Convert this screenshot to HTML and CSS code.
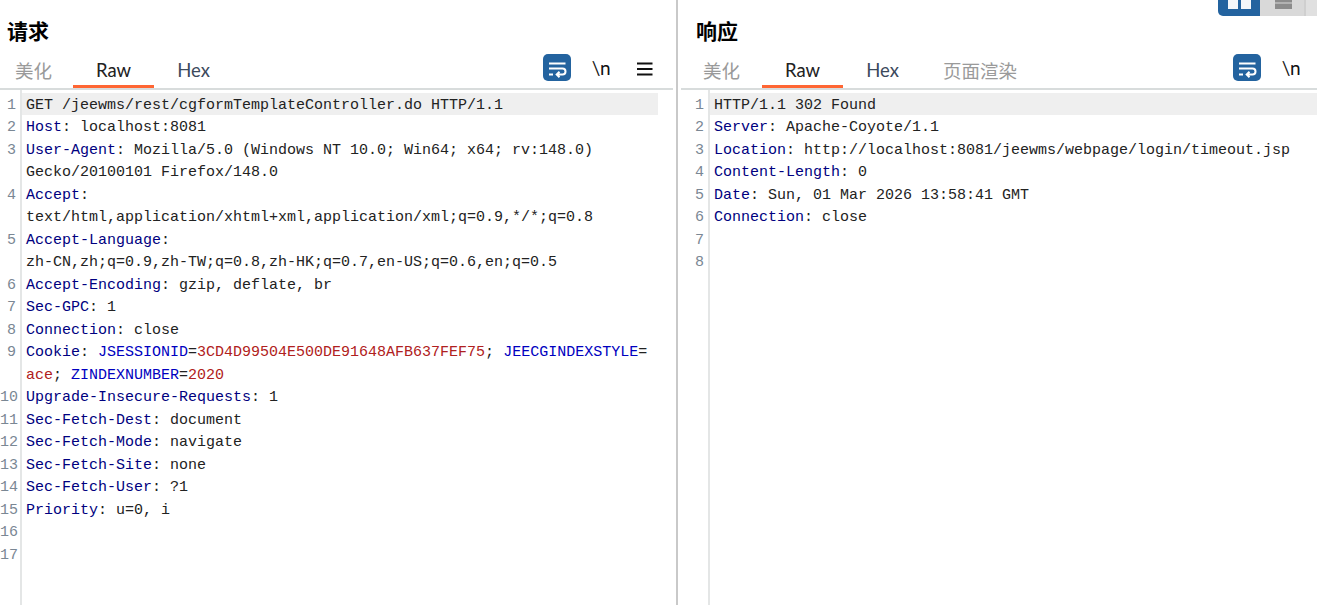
FILE: index.html
```html
<!DOCTYPE html>
<html lang="zh">
<head>
<meta charset="utf-8">
<title>Request / Response</title>
<link rel="stylesheet" href="styles.css">
</head>
<body>
<div class="app">
  <section class="pane pane-left">
    <h2 class="title">请求</h2>
    <div class="bar">
      <nav class="tabs">
        <span class="tab tab-muted tab-first">美化</span>
        <span class="tab tab-active">Raw</span>
        <span class="tab tab-hex">Hex</span>
      </nav>
      <div class="tools">
        <button class="wrap-btn"><svg width="28" height="27" viewBox="0 0 28 27"><path d="M6 9.500h16.500M6 14.500h13.500a3 3 0 0 1 0 6H14M6 20.500h4M16.500 17.800l-2.800 2.700 2.800 2.700" fill="none" stroke="#fff" stroke-width="2"/></svg></button>
        <span class="nl">\n</span>
        <svg class="menu" width="16" height="14" viewBox="0 0 16 14"><path d="M0 1.500h15.500M0 7h15.500M0 12.500h15.500" stroke="#111" stroke-width="2"/></svg>
      </div>
    </div>
    <div class="code">
      <div class="row hl"><span class="n">1</span><span class="c">GET /jeewms/rest/cgformTemplateController.do HTTP/1.1</span></div>
      <div class="row"><span class="n">2</span><span class="c"><b>Host</b>: localhost:8081</span></div>
      <div class="row"><span class="n">3</span><span class="c"><b>User-Agent</b>: Mozilla/5.0 (Windows NT 10.0; Win64; x64; rv:148.0)<br>Gecko/20100101 Firefox/148.0</span></div>
      <div class="row"><span class="n">4</span><span class="c"><b>Accept</b>:<br>text/html,application/xhtml+xml,application/xml;q=0.9,*/*;q=0.8</span></div>
      <div class="row"><span class="n">5</span><span class="c"><b>Accept-Language</b>:<br>zh-CN,zh;q=0.9,zh-TW;q=0.8,zh-HK;q=0.7,en-US;q=0.6,en;q=0.5</span></div>
      <div class="row"><span class="n">6</span><span class="c"><b>Accept-Encoding</b>: gzip, deflate, br</span></div>
      <div class="row"><span class="n">7</span><span class="c"><b>Sec-GPC</b>: 1</span></div>
      <div class="row"><span class="n">8</span><span class="c"><b>Connection</b>: close</span></div>
      <div class="row"><span class="n">9</span><span class="c"><b>Cookie</b>: <i>JSESSIONID</i>=<u>3CD4D99504E500DE91648AFB637FEF75</u>; <i>JEECGINDEXSTYLE</i>=<br><u>ace</u>; <i>ZINDEXNUMBER</i>=<u>2020</u></span></div>
      <div class="row"><span class="n">10</span><span class="c"><b>Upgrade-Insecure-Requests</b>: 1</span></div>
      <div class="row"><span class="n">11</span><span class="c"><b>Sec-Fetch-Dest</b>: document</span></div>
      <div class="row"><span class="n">12</span><span class="c"><b>Sec-Fetch-Mode</b>: navigate</span></div>
      <div class="row"><span class="n">13</span><span class="c"><b>Sec-Fetch-Site</b>: none</span></div>
      <div class="row"><span class="n">14</span><span class="c"><b>Sec-Fetch-User</b>: ?1</span></div>
      <div class="row"><span class="n">15</span><span class="c"><b>Priority</b>: u=0, i</span></div>
      <div class="row"><span class="n">16</span><span class="c"></span></div>
      <div class="row"><span class="n">17</span><span class="c"></span></div>
    </div>
  </section>
  <section class="pane pane-right">
    <div class="layout-switch">
      <span class="ls ls-on"><svg width="26" height="15" viewBox="0 0 26 15"><path d="M1 0h10v9H1zM14 0h10v9H14z" fill="#f4f7fa"/></svg></span>
      <span class="ls ls-off"><svg width="17" height="15" viewBox="0 0 17 15"><path d="M0 0h17v2.500H0zM0 3.500h17V9H0z" fill="#8c8c8c"/></svg></span>
      <span class="ls ls-end"></span>
    </div>
    <h2 class="title">响应</h2>
    <div class="bar">
      <nav class="tabs">
        <span class="tab tab-muted">美化</span>
        <span class="tab tab-active">Raw</span>
        <span class="tab tab-hex">Hex</span>
        <span class="tab tab-muted tab-long">页面渲染</span>
      </nav>
      <div class="tools">
        <button class="wrap-btn"><svg width="28" height="27" viewBox="0 0 28 27"><path d="M6 9.500h16.500M6 14.500h13.500a3 3 0 0 1 0 6H14M6 20.500h4M16.500 17.800l-2.800 2.700 2.800 2.700" fill="none" stroke="#fff" stroke-width="2"/></svg></button>
        <span class="nl">\n</span>
      </div>
    </div>
    <div class="code">
      <div class="row hl"><span class="n">1</span><span class="c">HTTP/1.1 302 Found</span></div>
      <div class="row"><span class="n">2</span><span class="c"><b>Server</b>: Apache-Coyote/1.1</span></div>
      <div class="row"><span class="n">3</span><span class="c"><b>Location</b>: http://localhost:8081/jeewms/webpage/login/timeout.jsp</span></div>
      <div class="row"><span class="n">4</span><span class="c"><b>Content-Length</b>: 0</span></div>
      <div class="row"><span class="n">5</span><span class="c"><b>Date</b>: Sun, 01 Mar 2026 13:58:41 GMT</span></div>
      <div class="row"><span class="n">6</span><span class="c"><b>Connection</b>: close</span></div>
      <div class="row"><span class="n">7</span><span class="c"></span></div>
      <div class="row"><span class="n">8</span><span class="c"></span></div>
    </div>
  </section>
</div>
</body>
</html>
```
FILE: styles.css
```css
* { box-sizing: border-box; }
html, body { margin: 0; height: 100%; overflow: hidden; background: #fff; }
body { font-family: "Noto Sans", "Noto Sans CJK SC", sans-serif; }
.app { display: flex; height: 605px; }
.pane { position: relative; display: flex; flex-direction: column; }
.pane-left { width: 678px; border-right: 2px solid #c9c9c9; padding-right: 3px; }
.pane-right { flex: 1; padding-left: 3px; }
.title { margin: 0; height: 54px; padding: 18px 0 0 7px; font: 700 21px/24px "Noto Sans CJK SC", sans-serif; color: #000; }
.pane-right .title { padding-left: 15px; }
.bar { display: flex; justify-content: space-between; height: 36px; border-bottom: 2px solid #d8dcdc; }
.tabs { display: flex; }
.tab { width: 81px; height: 34px; padding-top: 4px; text-align: center; font: 18.5px/24px Lato, "Noto Sans CJK SC", sans-serif; color: #3c4a5c; }
.tab-first { width: 73px; padding-right: 6px; }
.tab-hex { padding-right: 2px; }
.tab-long { width: 112px; }
.tab-muted { color: #9a9a9a; padding-top: 5px; }
.tab-active { color: #222; border-bottom: 3px solid #ff6633; }
.tools { display: flex; align-items: flex-start; }
.wrap-btn { width: 28px; height: 27px; margin: 0; padding: 0; border: 0; border-radius: 5px; background: #23639f; line-height: 0; }
.nl { margin-left: 21px; padding-top: 2px; font: 19px/24px Lato, sans-serif; letter-spacing: -0.5px; color: #111; }
.menu { margin: 8px 20px 0 27px; }
.pane-right .tools { padding-right: 17px; }
.code { flex: 1; isolation: isolate; padding-top: 4.6px; font: 15px/22.5px "Liberation Mono", monospace; color: #222; background: linear-gradient(#e4e6e6, #e4e6e6) 20px 0 / 2px 100% no-repeat; }
.pane-right .code { background-position: 27px 0; }
.row { display: flex; }
.n { flex: none; width: 22px; min-height: 22.5px; padding-right: 6px; text-align: right; color: #7a8794; }
.pane-right .n { width: 29px; }
.c { position: relative; flex: 1; padding-left: 4px; white-space: pre; }
.hl .c::before { content: ""; position: absolute; z-index: -1; left: 0; right: 15px; top: -2px; bottom: 2px; background: #efefef; }
.pane-right .hl .c::before { right: 0; }
.c b { font-weight: 400; color: #000080; }
.c i { font-style: normal; color: #0000c0; }
.c u { text-decoration: none; color: #b02020; }
.layout-switch { position: absolute; top: 0; right: 0; display: flex; height: 16px; }
.ls { display: block; line-height: 0; }
.ls-on { width: 42px; padding-left: 9px; background: #23639f; border-radius: 0 0 0 5px; }
.ls-off { width: 44px; padding-left: 15px; background: #d9d9d9; }
.ls-end { width: 13px; background: #e0e0e0; border-left: 2px solid #cfcfcf; }
```
